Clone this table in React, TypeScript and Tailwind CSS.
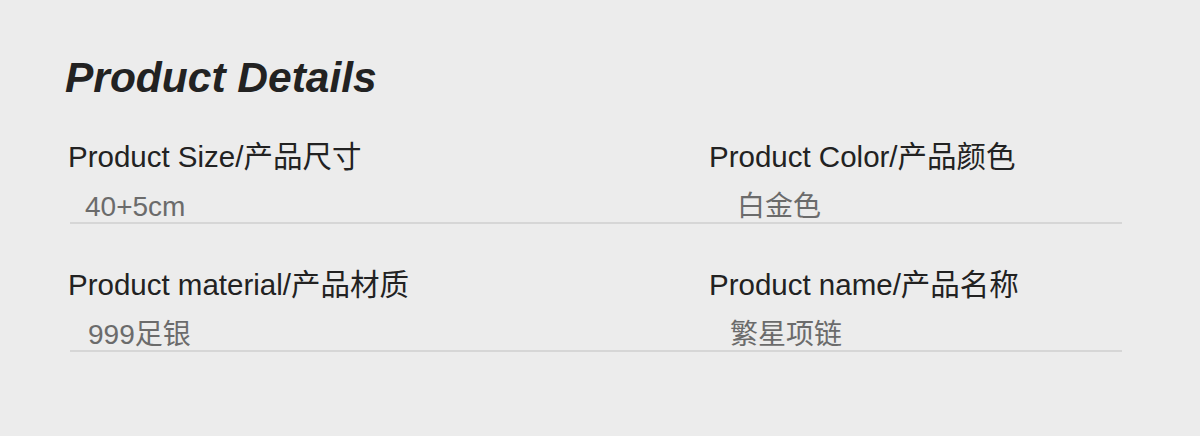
const rows = [
  [
    { label: "Product Size/产品尺寸", value: "40+5cm", indent: "pl-[17px]" },
    { label: "Product Color/产品颜色", value: "白金色", indent: "pl-[28px]" },
  ],
  [
    { label: "Product material/产品材质", value: "999足银", indent: "pl-[20px]" },
    { label: "Product name/产品名称", value: "繁星项链", indent: "pl-[21px]" },
  ],
];

export default function App() {
  return (
    <div className="w-[1200px] h-[436px] bg-[#ececec] overflow-hidden pl-[68px] pt-[57px] font-['Liberation_Sans','Noto_Sans_CJK_SC',sans-serif]">
      <h1 className="italic font-bold text-[42.5px] leading-[42px] text-[#222] -ml-[3px]">
        Product Details
      </h1>
      <div className="mt-[43px] flex flex-col gap-[46px] w-[1054px]">
        {rows.map((row, i) => (
          <div key={i}>
            <div className="grid grid-cols-[641px_1fr]">
              {row.map((item, j) => (
                <div key={j}>
                  <div className="text-[29.5px] leading-[29px] text-[#222]">{item.label}</div>
                  <div className={`mt-[22px] text-[28px] leading-[28px] text-[#6b6b6b] ${item.indent}`}>{item.value}</div>
                </div>
              ))}
            </div>
            <div className="ml-[2px] mt-[1px] border-b-2 border-[#d6d6d6]" />
          </div>
        ))}
      </div>
    </div>
  );
}
